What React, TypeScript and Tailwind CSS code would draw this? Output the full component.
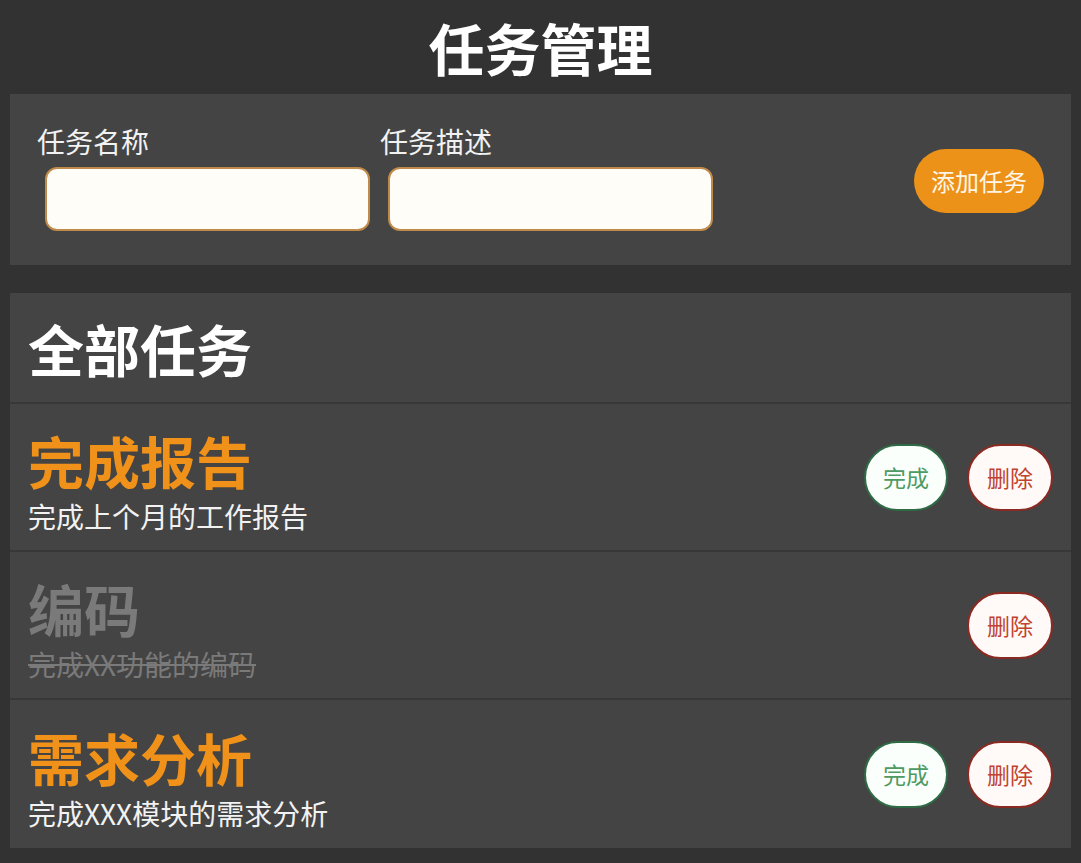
import React, { useState } from 'react';

interface Task {
  id: number;
  name: string;
  desc: string;
  done: boolean;
}

const initialTasks: Task[] = [
  { id: 1, name: '完成报告', desc: '完成上个月的工作报告', done: false },
  { id: 2, name: '编码', desc: '完成XX功能的编码', done: true },
  { id: 3, name: '需求分析', desc: '完成XXX模块的需求分析', done: false },
];

const font = { fontFamily: '"Noto Sans CJK SC", "Noto Sans", sans-serif' };

export default function App() {
  const [tasks, setTasks] = useState<Task[]>(initialTasks);
  const [name, setName] = useState('');
  const [desc, setDesc] = useState('');

  const addTask = () => {
    if (!name.trim()) return;
    setTasks([...tasks, { id: Date.now(), name, desc, done: false }]);
    setName('');
    setDesc('');
  };

  const finish = (id: number) =>
    setTasks(tasks.map((t) => (t.id === id ? { ...t, done: true } : t)));

  const remove = (id: number) => setTasks(tasks.filter((t) => t.id !== id));

  return (
    <div className="min-h-[863px] bg-[#323232] px-[10px] pb-[15px]" style={font}>
      <header className="flex h-[94px] items-center justify-center">
        <h1 className="text-[56px] font-bold leading-none text-white">任务管理</h1>
      </header>

      {/* 添加任务表单 */}
      <div className="flex h-[171px] items-center justify-between bg-[#444444] px-[27px]">
        <div className="flex gap-[10px] pb-[6px]">
          <div className="flex w-[333px] flex-col">
            <label className="mb-[8px] text-[28px] leading-[36px] text-[#f2f2f2]">任务名称</label>
            <input
              value={name}
              onChange={(e) => setName(e.target.value)}
              className="ml-2 h-[64px] w-[325px] rounded-[12px] border-2 border-[#c08a4a] bg-[#fffdf8] px-3 text-xl outline-none"
            />
          </div>
          <div className="flex w-[333px] flex-col">
            <label className="mb-[8px] text-[28px] leading-[36px] text-[#f2f2f2]">任务描述</label>
            <input
              value={desc}
              onChange={(e) => setDesc(e.target.value)}
              className="ml-2 h-[64px] w-[325px] rounded-[12px] border-2 border-[#c08a4a] bg-[#fffdf8] px-3 text-xl outline-none"
            />
          </div>
        </div>
        <button
          onClick={addTask}
          className="mt-[3px] h-[64px] w-[130px] rounded-full bg-[#ec9218] text-[24px] text-[#fff6e8]"
        >
          添加任务
        </button>
      </div>

      {/* 任务列表 */}
      <div className="mt-[28px] bg-[#444444]">
        <div className="flex h-[111px] items-center border-b-2 border-[#383838] px-[18px]">
          <h2 className="text-[56px] font-bold leading-none text-white">全部任务</h2>
        </div>
        {tasks.map((task, i) => (
          <div
            key={task.id}
            className={`flex h-[148px] items-center justify-between px-[18px] ${
              i < tasks.length - 1 ? 'border-b-2 border-[#383838]' : ''
            }`}
          >
            <div className="flex flex-col pt-[14px]">
              <span
                className={`text-[56px] font-bold leading-[64px] ${
                  task.done ? 'text-[#7a7a7a]' : 'text-[#f0921a]'
                }`}
              >
                {task.name}
              </span>
              <span
                className={`text-[28px] leading-[48px] ${
                  task.done ? 'text-[#7a7a7a] line-through' : 'text-[#f2f2f2]'
                }`}
              >
                {task.desc}
              </span>
            </div>
            <div className="flex gap-[19px]">
              {!task.done && (
                <button
                  onClick={() => finish(task.id)}
                  className="h-[67px] w-[84px] rounded-full border-2 border-[#2f6b45] bg-[#fbfffc] text-[23px] text-[#4d9a62]"
                >
                  完成
                </button>
              )}
              <button
                onClick={() => remove(task.id)}
                className="h-[67px] w-[86px] rounded-full border-2 border-[#8a2a22] bg-[#fffaf8] text-[23px] text-[#c0432f]"
              >
                删除
              </button>
            </div>
          </div>
        ))}
      </div>
    </div>
  );
}
